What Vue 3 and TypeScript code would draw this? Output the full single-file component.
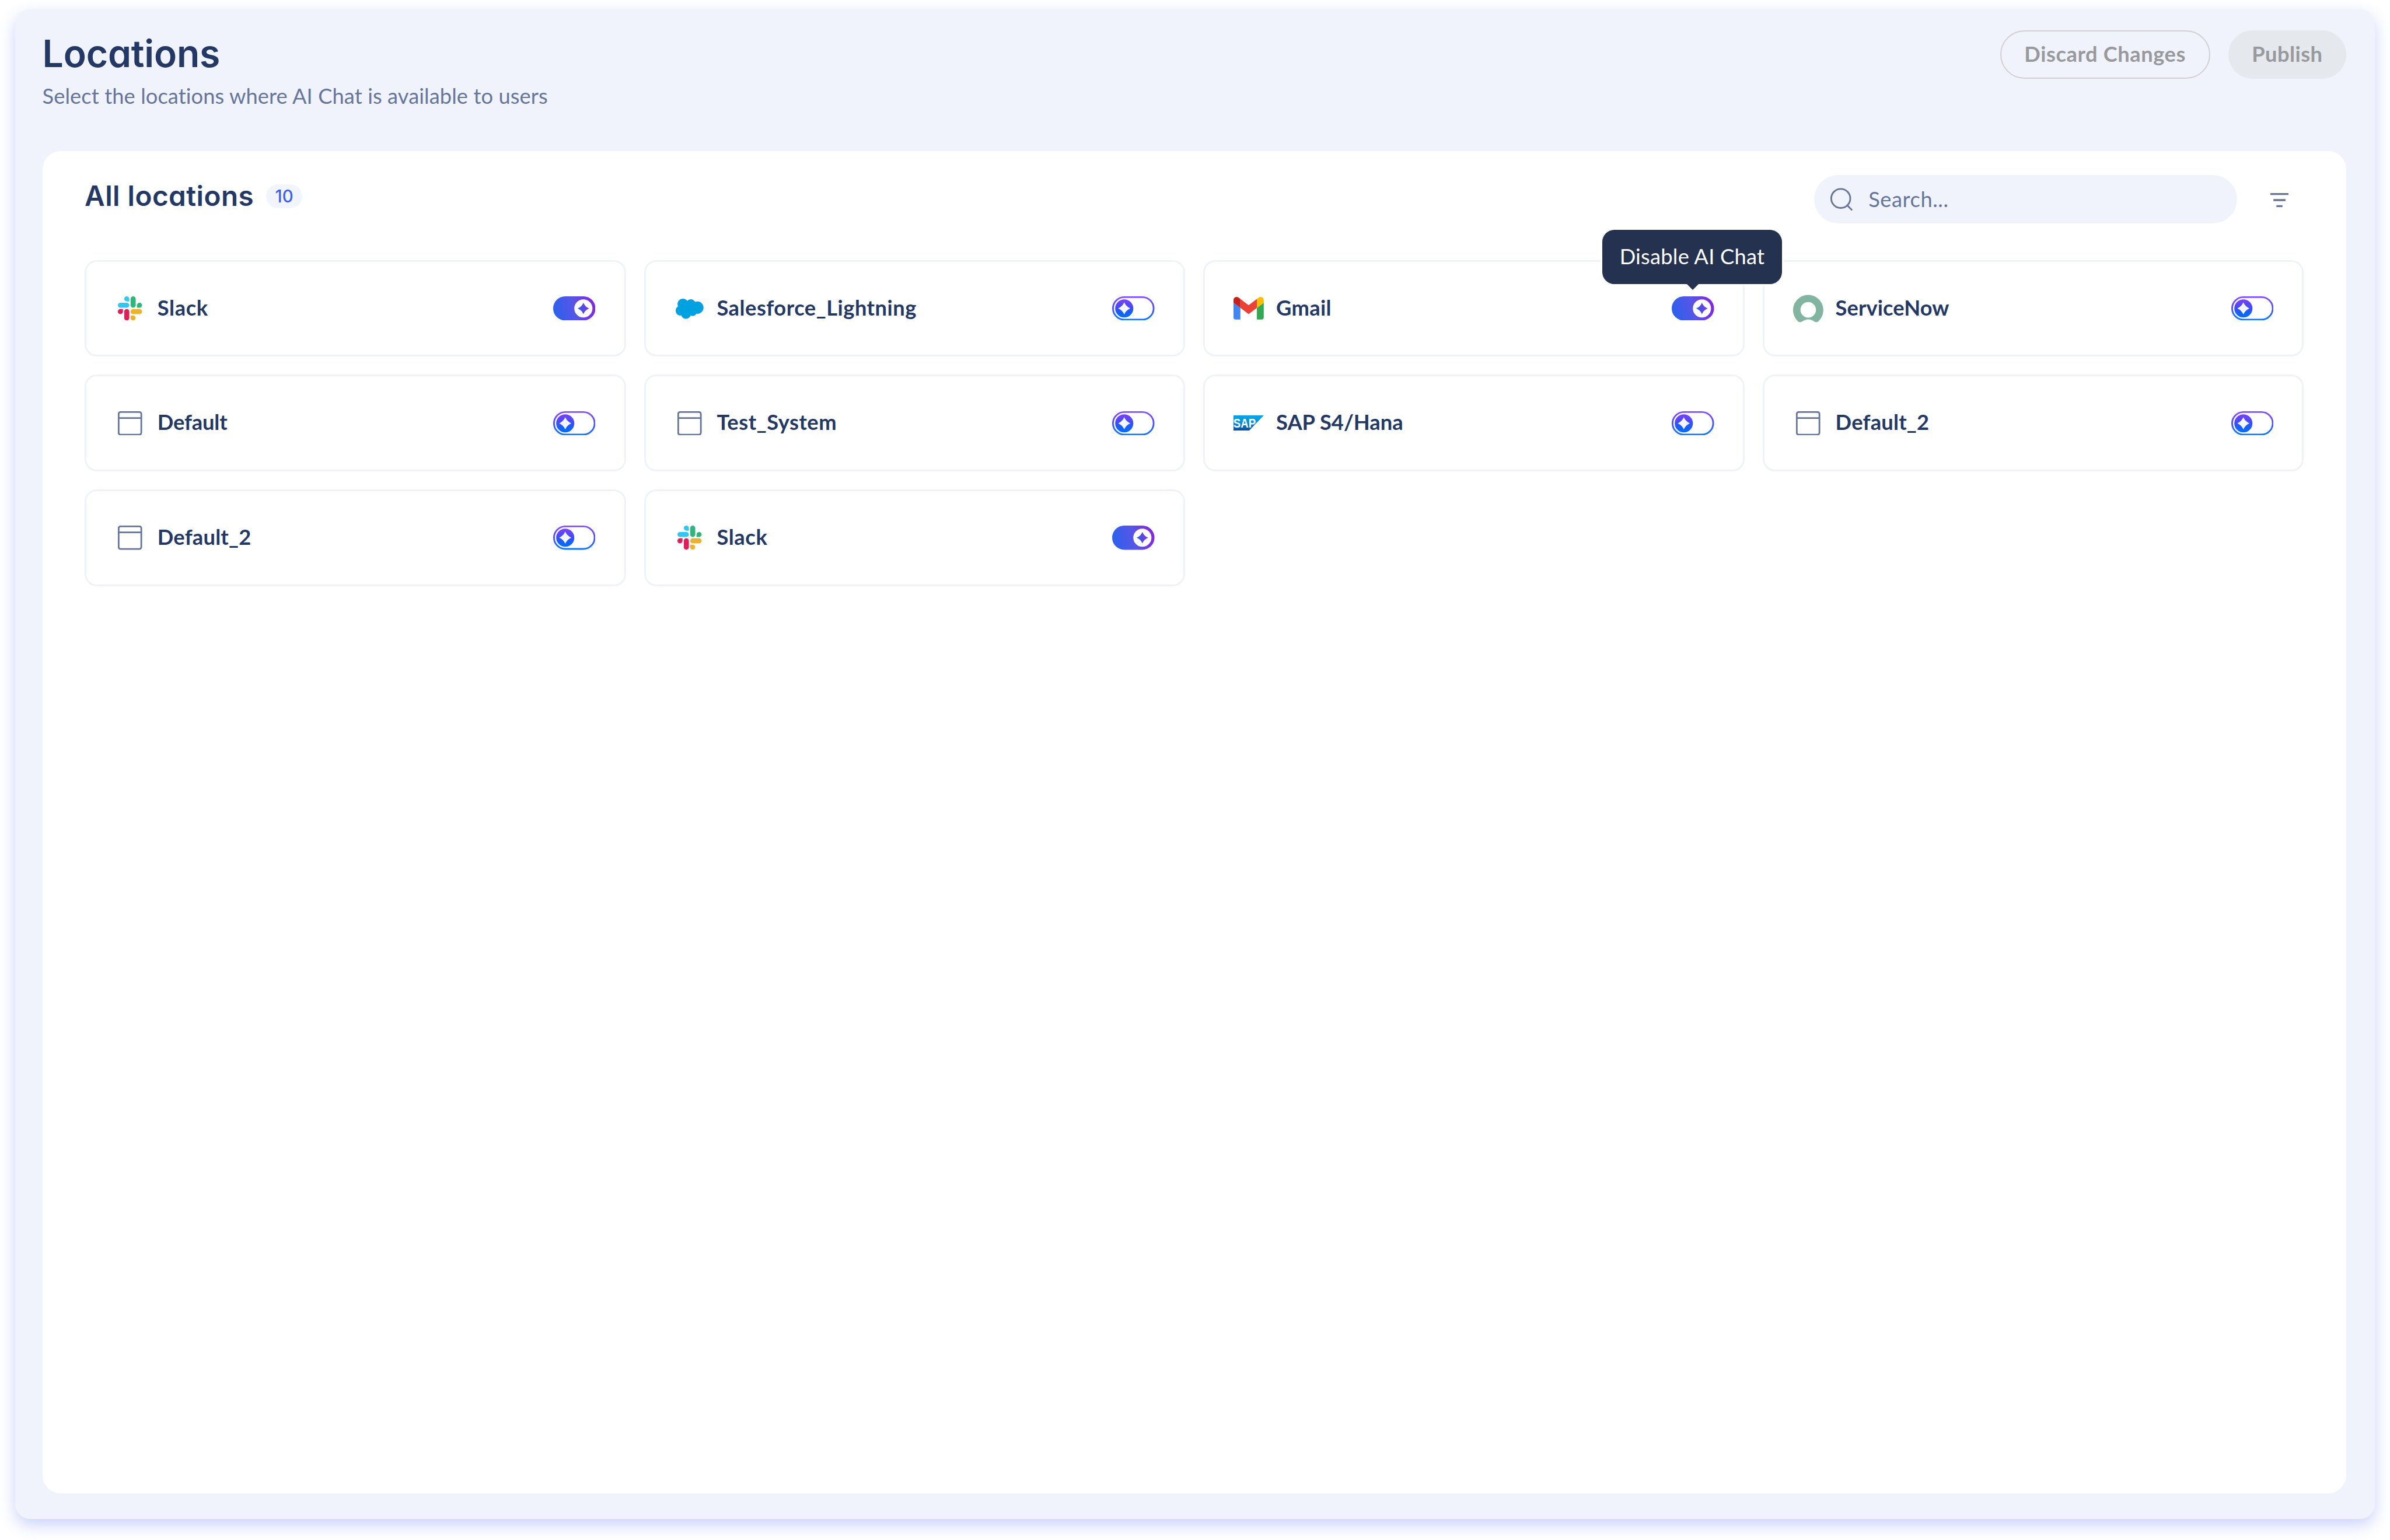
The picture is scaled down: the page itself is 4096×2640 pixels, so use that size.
<script setup lang="ts">
import { ref, type Directive } from 'vue'

type Icon = 'slack' | 'salesforce' | 'gmail' | 'servicenow' | 'window' | 'sap'

interface Place {
  name: string
  icon: Icon
  on: boolean
  width: number
  tip?: string
}

const places = ref<Place[]>([
  { name: 'Slack', icon: 'slack', on: true, width: 33.6 },
  { name: 'Salesforce_Lightning', icon: 'salesforce', on: false, width: 132.2 },
  { name: 'Gmail', icon: 'gmail', on: true, width: 36.6, tip: 'Disable AI Chat' },
  { name: 'ServiceNow', icon: 'servicenow', on: false, width: 75.2 },
  { name: 'Default', icon: 'window', on: false, width: 46.2 },
  { name: 'Test_System', icon: 'window', on: false, width: 79.4 },
  { name: 'SAP S4/Hana', icon: 'sap', on: false, width: 84 },
  { name: 'Default_2', icon: 'window', on: false, width: 62 },
  { name: 'Default_2', icon: 'window', on: false, width: 62 },
  { name: 'Slack', icon: 'slack', on: true, width: 33.6 },
])

// Tracks a label out (or in) so that it takes the given width, in tenths of a rem.
const vTrack: Directive<HTMLElement, number> = {
  mounted(el, { value }) {
    const unit = parseFloat(getComputedStyle(document.documentElement).fontSize) / 10
    const count = (el.textContent ?? '').trim().length
    const spacing = (value * unit - el.getBoundingClientRect().width) / count
    el.style.letterSpacing = `${spacing.toFixed(3)}px`
  },
}
</script>

<template>
  <div class="page">
  <main class="frame">
    <header class="head">
      <div class="titles">
        <h1><span v-track="117.6">Locations</span></h1>
        <p><span v-track="334.6">Select the locations where AI Chat is available to users</span></p>
      </div>
      <div class="actions">
        <button class="btn outline" type="button"><span v-track="106.8">Discard Changes</span></button>
        <button class="btn solid" type="button"><span v-track="46.8">Publish</span></button>
      </div>
    </header>

    <section class="panel">
      <div class="bar">
        <div class="heading">
          <h2><span v-track="112">All locations</span></h2>
          <span class="count">{{ places.length }}</span>
        </div>
        <div class="tools">
          <div class="search">
            <svg class="glass" viewBox="0 0 16 16">
              <circle cx="7.6" cy="7.4" r="6.3" />
              <path d="M12 12.1 14.8 14.9" />
            </svg>
            <span v-track="53">Search...</span>
          </div>
          <svg class="filter" viewBox="0 0 12 10">
            <path d="M0 1h12M2 5h8M4 9h4" />
          </svg>
        </div>
      </div>

      <div class="grid">
        <article v-for="(p, i) in places" :key="i" class="card">
          <div class="icon">
            <svg v-if="p.icon === 'slack'" class="i-slack" viewBox="0 0 122.8 122.8">
              <g fill="#e01e5a">
                <path d="M25.8 77.6c0 7.1-5.8 12.9-12.9 12.9S0 84.7 0 77.6s5.8-12.9 12.9-12.9h12.9v12.9z" />
                <path d="M32.3 77.6c0-7.1 5.8-12.9 12.9-12.9s12.9 5.8 12.9 12.9v32.3c0 7.1-5.8 12.9-12.9 12.9s-12.9-5.8-12.9-12.9V77.6z" />
              </g>
              <g fill="#36c5f0">
                <path d="M45.2 25.8c-7.1 0-12.9-5.8-12.9-12.9S38.1 0 45.2 0s12.9 5.8 12.9 12.9v12.9H45.2z" />
                <path d="M45.2 32.3c7.1 0 12.9 5.8 12.9 12.9s-5.8 12.9-12.9 12.9H12.9C5.8 58.1 0 52.3 0 45.2s5.8-12.9 12.9-12.9h32.3z" />
              </g>
              <g fill="#2eb67d">
                <path d="M97 45.2c0-7.1 5.8-12.9 12.9-12.9s12.9 5.8 12.9 12.9-5.8 12.9-12.9 12.9H97V45.2z" />
                <path d="M90.5 45.2c0 7.1-5.8 12.9-12.9 12.9s-12.9-5.8-12.9-12.9V12.9C64.7 5.8 70.5 0 77.6 0s12.9 5.8 12.9 12.9v32.3z" />
              </g>
              <g fill="#ecb22e">
                <path d="M77.6 97c7.1 0 12.9 5.8 12.9 12.9s-5.8 12.9-12.9 12.9-12.9-5.8-12.9-12.9V97h12.9z" />
                <path d="M77.6 90.5c-7.1 0-12.9-5.8-12.9-12.9s5.8-12.9 12.9-12.9h32.3c7.1 0 12.9 5.8 12.9 12.9s-5.8 12.9-12.9 12.9H77.6z" />
              </g>
            </svg>

            <svg v-else-if="p.icon === 'salesforce'" class="i-cloud" viewBox="0 3.6 24 16.8" preserveAspectRatio="none">
              <path fill="#00a1e0" d="M10.006 5.415a4.195 4.195 0 013.045-1.306c1.56 0 2.954.9 3.69 2.205.63-.3 1.35-.45 2.1-.45 2.85 0 5.159 2.34 5.159 5.22s-2.31 5.22-5.176 5.22c-.345 0-.69-.044-1.02-.104a3.75 3.75 0 01-3.3 1.95c-.6 0-1.155-.15-1.65-.375A4.314 4.314 0 018.88 20.4a4.302 4.302 0 01-4.05-2.82c-.27.062-.54.076-.825.076-2.204 0-4.005-1.8-4.005-4.05 0-1.5.811-2.805 2.01-3.51-.255-.57-.39-1.2-.39-1.846 0-2.58 2.1-4.65 4.65-4.65 1.53 0 2.85.705 3.736 1.815z" />
            </svg>

            <svg v-else-if="p.icon === 'gmail'" class="i-gmail" viewBox="52 42 88 66">
              <path fill="#4285f4" d="M58 108h14V74L52 59v43c0 3.32 2.69 6 6 6" />
              <path fill="#34a853" d="M120 108h14c3.32 0 6-2.69 6-6V59l-20 15" />
              <path fill="#fbbc04" d="M120 48v26l20-15v-8c0-7.42-8.47-11.65-14.4-7.2" />
              <path fill="#ea4335" d="M72 74V48l24 18 24-18v26L96 92" />
              <path fill="#c5221f" d="M52 51v8l20 15V48l-5.6-4.2c-5.94-4.45-14.4-.22-14.4 7.2" />
            </svg>

            <svg v-else-if="p.icon === 'servicenow'" class="i-now" viewBox="0 0 20 20">
              <path
                fill="#81b5a1"
                fill-rule="evenodd"
                d="M10 1C4.500 1 0 5.500 0 11c0 2.900 1.200 5.500 3.200 7.400.8.8 2 .8 2.900.1A6.300 6.300 0 0 1 13.900 18.500c.9.700 2.100.700 2.900-.1C18.800 16.500 20 13.900 20 11 20 5.500 15.500 1 10 1zM10 16A5.150 5.150 0 1 1 10 5.700 5.150 5.150 0 0 1 10 16z"
              />
            </svg>

            <svg v-else-if="p.icon === 'sap'" class="i-sap" viewBox="0 0 20 10">
              <defs>
                <linearGradient id="sap-fill" x1="0" y1="0" x2="0" y2="1">
                  <stop offset="0" stop-color="#00a5ea" />
                  <stop offset=".45" stop-color="#0094da" />
                  <stop offset="1" stop-color="#004fa8" />
                </linearGradient>
              </defs>
              <path fill="url(#sap-fill)" d="M0 0h20L10.400 10H0z" />
              <text x="-.1" y="8.1" textLength="14.800" lengthAdjust="spacingAndGlyphs">SAP</text>
            </svg>

            <svg v-else class="i-window" viewBox="0 0 16 16">
              <rect x=".5" y=".5" width="15" height="15" rx="1.300" />
              <path d="M.5 4.500h15" />
            </svg>
          </div>

          <span class="name"><span v-track="p.width">{{ p.name }}</span></span>

          <button class="toggle" type="button" @click="p.on = !p.on">
            <svg viewBox="0 0 28 16">
              <defs>
                <linearGradient :id="`track-${i}`" gradientUnits="userSpaceOnUse" x1="1" y1="11" x2="27" y2="4">
                  <stop offset="0" stop-color="#2d60ee" />
                  <stop offset=".5" stop-color="#5656e6" />
                  <stop offset="1" stop-color="#8426e2" />
                </linearGradient>
                <linearGradient :id="`star-${i}`" x1="0" y1=".5" x2="1" y2=".4">
                  <stop offset="0" stop-color="#2f5cf0" />
                  <stop offset="1" stop-color="#8038da" />
                </linearGradient>
                <linearGradient :id="`ring-${i}`" gradientUnits="userSpaceOnUse" x1="0" y1="0" x2="0" y2="16">
                  <stop offset="0" stop-color="#8a4dff" />
                  <stop offset=".5" stop-color="#4a50fb" />
                  <stop offset="1" stop-color="#0a7cff" />
                </linearGradient>
                <linearGradient :id="`knob-${i}`" x1="0" y1="0" x2="0" y2="1">
                  <stop offset="0" stop-color="#7c40ff" />
                  <stop offset=".5" stop-color="#3b4dfc" />
                  <stop offset=".8" stop-color="#0a66ff" />
                  <stop offset="1" stop-color="#0a6cff" />
                </linearGradient>
              </defs>
              <template v-if="p.on">
                <rect width="28" height="16" rx="8" :fill="`url(#track-${i})`" />
                <circle cx="20" cy="8" r="6" fill="#fff" />
                <path :fill="`url(#star-${i})`" d="M20 4.200Q21.100 6.900 23.800 8 21.100 9.100 20 11.800 18.900 9.100 16.200 8 18.900 6.900 20 4.200z" />
              </template>
              <template v-else>
                <rect x=".55" y=".55" width="26.9" height="14.9" rx="7.450" fill="#fff" stroke-width="1.1" :stroke="`url(#ring-${i})`" />
                <circle cx="8" cy="8" r="6" :fill="`url(#knob-${i})`" />
                <path fill="#f5f8ff" d="M8 4Q9.200 6.800 12 8 9.200 9.200 8 12 6.800 9.200 4 8 6.800 6.800 8 4z" />
              </template>
            </svg>
            <span v-if="p.tip" class="tip"><span v-track="96">{{ p.tip }}</span></span>
          </button>
        </article>
      </div>
    </section>
  </main>
  </div>
</template>

<style>
html {
  font-size: 25.908px;
  background: #fff;
}
body {
  margin: 0;
}
</style>

<style scoped>
* {
  box-sizing: border-box;
}
.page {
  height: 100vh;
  padding: 0.6rem 0 0 1rem;
  overflow: hidden;
  background: #fff;
}
.frame {
  display: flex;
  flex-direction: column;
  width: 156.1rem;
  height: 99.9rem;
  padding: 1.4rem 1.9rem 1.7rem 1.8rem;
  border-radius: 1rem;
  background: #f0f3fb;
  box-shadow: 0 0.4rem 1rem rgba(48, 82, 235, 0.25);
  font-family: Lato, 'Liberation Sans', sans-serif;
  font-size: 1.4rem;
  color: #233864;
}
.head {
  display: flex;
  justify-content: space-between;
  align-items: flex-start;
  height: 8rem;
}
h1,
h2,
p {
  margin: 0;
  white-space: nowrap;
}
h1,
h2 {
  font-family: Inter, sans-serif;
  font-weight: 600;
  font-feature-settings: 'cv11';
}
h1 {
  font-size: 2.48rem;
  line-height: 3.1rem;
}
p {
  margin-top: 0.25rem;
  line-height: 2rem;
  color: #66759b;
}
.actions {
  display: flex;
  gap: 1.2rem;
}
.btn {
  display: flex;
  align-items: center;
  justify-content: center;
  height: 3.2rem;
  padding: 0 0 0.06rem;
  border: 0;
  border-radius: 1.6rem;
  background: none;
  font: 700 1.4rem/2rem Lato, 'Liberation Sans', sans-serif;
  color: #98999c;
  white-space: nowrap;
}
.outline {
  width: 13.9rem;
  border: 0.1rem solid #cfd0d3;
}
.solid {
  width: 7.8rem;
  background: #e5e8ec;
}
.panel {
  flex: 1;
  padding: 1.6rem 2.8rem;
  border-radius: 1.2rem;
  background: #fff;
}
.bar {
  display: flex;
  justify-content: space-between;
  height: 5.6rem;
}
.heading {
  display: flex;
  align-items: center;
  height: 2.8rem;
  gap: 0.8rem;
}
h2 {
  font-size: 1.84rem;
  line-height: 2.8rem;
}
.count {
  width: 2.4rem;
  height: 1.6rem;
  border-radius: 0.8rem;
  background: #f2f5fe;
  font-family: Inter, sans-serif;
  font-size: 1.13rem;
  font-weight: 500;
  line-height: 1.6rem;
  text-align: center;
  color: #3c5ff0;
}
.tools {
  display: flex;
  align-items: center;
  height: 3.2rem;
  padding-right: 1rem;
  gap: 2.2rem;
}
.search {
  display: flex;
  align-items: center;
  width: 28rem;
  height: 3.2rem;
  padding-left: 1rem;
  gap: 1rem;
  border-radius: 1.6rem;
  background: #f0f3fb;
  line-height: 2rem;
  color: #66759b;
}
.glass {
  width: 1.6rem;
  height: 1.6rem;
  fill: none;
  stroke: #66759b;
  stroke-width: 1.1;
  stroke-linecap: round;
}
.filter {
  width: 1.2rem;
  height: 1rem;
  margin-top: 0.1rem;
  fill: none;
  stroke: #64749a;
  stroke-width: 1.3;
}
.grid {
  display: grid;
  grid-template-columns: repeat(4, 1fr);
  gap: 1.2rem;
}
.card {
  display: flex;
  align-items: center;
  height: 6.4rem;
  padding: 0 1.9rem;
  border: 0.12rem solid #f0f2fa;
  border-radius: 0.8rem;
}
.icon {
  display: flex;
  align-items: center;
  justify-content: center;
  width: 2rem;
  height: 2rem;
  margin-right: 0.8rem;
}
.icon svg {
  display: block;
  flex: none;
}
.i-slack,
.i-window {
  width: 1.6rem;
  height: 1.6rem;
}
.i-window {
  fill: none;
  stroke: #66759b;
  stroke-width: 1.1;
}
.i-cloud {
  width: 1.84rem;
  height: 1.33rem;
  margin-top: 0.08rem;
}
.i-gmail {
  width: 2rem;
  height: 1.5rem;
}
.i-now {
  width: 2rem;
  height: 2rem;
}
.i-sap {
  width: 2rem;
  height: 1rem;
}
.i-sap text {
  font: 700 8.6px 'Liberation Sans', sans-serif;
  fill: #fff;
}
.name {
  flex: 1;
  padding-bottom: 0.08rem;
  font-weight: 700;
  line-height: 2rem;
  white-space: nowrap;
}
.toggle {
  position: relative;
  width: 2.8rem;
  height: 1.6rem;
  padding: 0;
  border: 0;
  background: none;
}
.toggle svg {
  display: block;
  width: 100%;
  height: 100%;
}
.tip {
  position: absolute;
  z-index: 1;
  left: -4.6rem;
  bottom: 2.4rem;
  display: flex;
  align-items: center;
  justify-content: center;
  width: 11.9rem;
  height: 3.6rem;
  border-radius: 0.8rem;
  background: #24314f;
  box-shadow: 0 0 0 0.12rem #fff;
  font: 400 1.4rem/2rem Lato, 'Liberation Sans', sans-serif;
  color: #fff;
  white-space: nowrap;
}
.tip::after {
  content: '';
  position: absolute;
  top: 100%;
  left: 5.6rem;
  border: 0.4rem solid transparent;
  border-top-color: #24314f;
  border-bottom: 0;
}
</style>
